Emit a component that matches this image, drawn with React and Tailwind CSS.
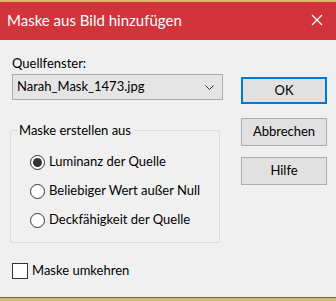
import React from 'react';

const font = { fontFamily: 'Lato, "Noto Sans", sans-serif' };

const Radio = ({ checked, label }) => (
  <label className="flex items-center h-[16px] whitespace-nowrap">
    <span className="w-[15px] h-[15px] rounded-full border border-[#333] bg-white flex items-center justify-center">
      {checked && <span className="w-[9px] h-[9px] rounded-full bg-[#333]" />}
    </span>
    <span className="ml-[4px]">{label}</span>
  </label>
);

const Button = ({ children, primary }) => (
  <button
    className={
      primary
        ? 'w-[86px] h-[27px] bg-[#e1e1e1] border-2 border-[#0078d7] flex items-center justify-center'
        : 'w-[86px] h-[28px] bg-[#e1e1e1] border border-[#adadad] flex items-center justify-center'
    }
  >
    {children}
  </button>
);

export default function App() {
  return (
    <div className="w-[336px] h-[301px] flex flex-col text-[13px] text-black bg-[#f0f0f0] whitespace-nowrap" style={font}>
      <div className="h-[2px] bg-[#dcb56e]" />
      {/* Title bar */}
      <div className="h-[38px] bg-[#d1343b] flex items-center justify-between pl-[7px] pr-[13px] text-white">
        <span className="text-[15px] -mt-[2px]">Maske aus Bild hinzufügen</span>
        <svg width="12" height="12" viewBox="0 0 12 12" className="-mt-[2px]">
          <path d="M1 1 L11 11 M11 1 L1 11" stroke="white" strokeWidth="1.2" />
        </svg>
      </div>

      {/* Body */}
      <div className="flex-1 flex pl-[12px]">
        <div className="w-[211px] flex flex-col">
          <div className="mt-[14px] leading-[18px]">Quellfenster:</div>
          <div className="mt-[2px] h-[26px] bg-[#e5e5e5] border border-[#acacac] flex items-center justify-between pl-[4px] pr-[8px]">
            <span>Narah_Mask_1473.jpg</span>
            <svg width="9" height="5" viewBox="0 0 9 5">
              <path d="M0.5 0.5 L4.5 4.5 L8.5 0.5" stroke="#333" fill="none" strokeWidth="1" />
            </svg>
          </div>

          {/* Group box */}
          <div className="relative mt-[30px] -ml-[2px] w-[210px] h-[113px] border border-[#dcdcdc] rounded-[2px]">
            <span className="absolute -top-[10px] left-[6px] px-[2px] bg-[#f0f0f0] leading-[18px]">
              Maske erstellen aus
            </span>
            <div className="flex flex-col gap-[13px] pl-[19px] pt-[23px]">
              <Radio checked label="Luminanz der Quelle" />
              <Radio label="Beliebiger Wert außer Null" />
              <Radio label="Deckfähigkeit der Quelle" />
            </div>
          </div>

          <label className="mt-[20px] flex items-center h-[16px]">
            <span className="w-[16px] h-[16px] border border-[#333] bg-white" />
            <span className="ml-[4px]">Maske umkehren</span>
          </label>
        </div>

        <div className="ml-[18px] flex flex-col mt-[37px]">
          <Button primary>OK</Button>
          <div className="mt-[14px]">
            <Button>Abbrechen</Button>
          </div>
          <div className="mt-[11px]">
            <Button>Hilfe</Button>
          </div>
        </div>
      </div>

      <div className="h-px bg-[#d1343b]" />
      <div className="h-[3px] bg-[#dcb56e]" />
    </div>
  );
}
